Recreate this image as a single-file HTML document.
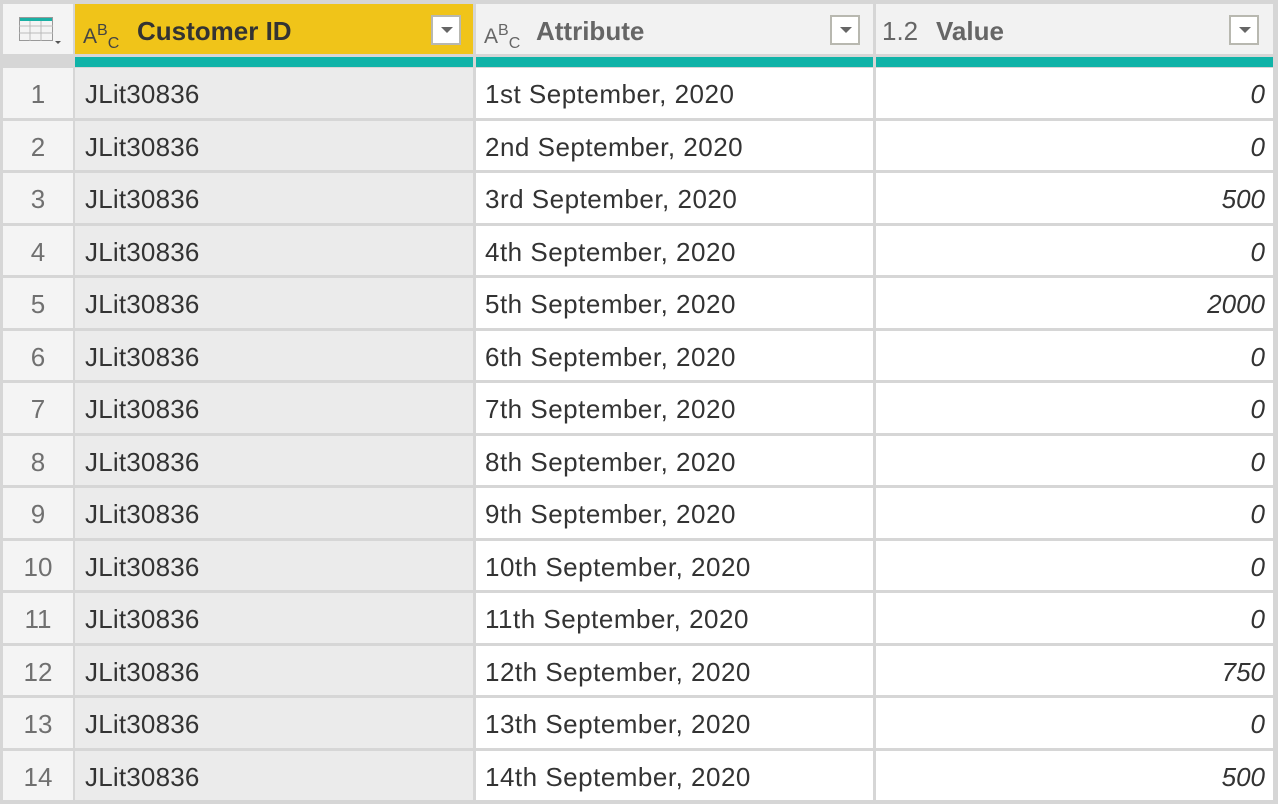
<!DOCTYPE html>
<html><head><meta charset="utf-8"><style>
body{margin:0;width:1278px;height:804px;overflow:hidden;background:#d6d6d6;font-family:"Liberation Sans",sans-serif;position:relative}
.c{position:absolute;box-sizing:border-box;white-space:nowrap;overflow:hidden}
.h{background:#f2f2f2;color:#666;font-weight:bold;font-size:26px;line-height:54px}
.dd{position:absolute;top:11px;width:30px;height:30px;background:#fff;border:2px solid #b8b8b0;box-sizing:border-box}
.dd:after{content:"";position:absolute;left:8px;top:10px;border-left:6px solid transparent;border-right:6px solid transparent;border-top:6px solid #666}
.n{background:#f4f4f4;color:#707070;font-size:26px;text-align:center}
.id{background:#ebebeb;color:#333;font-size:26px;padding-left:10px;letter-spacing:0.2px}
.at{background:#fff;color:#333;font-size:26px;padding-left:9px;letter-spacing:0.5px}
.v{background:#fff;color:#333;font-size:26px;font-style:italic;text-align:right;padding-right:8px}
.abc{font-weight:normal;font-size:21px;position:absolute;left:8px;top:0}
</style></head><body>
<div class="c" style="left:3px;top:4px;width:70px;height:50px;background:#f4f4f4">
<svg width="70" height="50"><rect x="16" y="13" width="34" height="4" fill="#1ab0a4"/><rect x="16.5" y="13.5" width="33" height="23" fill="none" stroke="#999"/><path d="M16 22h34M16 29h34M27 17v20M38 17v20" stroke="#bbb"/><path d="M52 37l3 3 3-3z" fill="#555"/></svg></div>
<div class="c h" style="left:75px;top:4px;width:398px;height:50px;background:#f0c419;color:#333"><span class="abc" style="color:#444">A<sup style="font-size:16px">B</sup><sub style="font-size:16px">C</sub></span><span style="position:absolute;left:62px">Customer ID</span><div class="dd" style="left:356px"></div></div>
<div class="c h" style="left:476px;top:4px;width:397px;height:50px"><span class="abc">A<sup style="font-size:16px">B</sup><sub style="font-size:16px">C</sub></span><span style="position:absolute;left:60px">Attribute</span><div class="dd" style="left:354px"></div></div>
<div class="c h" style="left:876px;top:4px;width:397px;height:50px"><span style="position:absolute;left:6px;font-weight:normal;font-size:26px">1.2</span><span style="position:absolute;left:60px">Value</span><div class="dd" style="left:353px"></div></div>
<div class="c" style="left:75px;top:57px;width:398px;height:10px;background:#10b3a8"></div>
<div class="c" style="left:476px;top:57px;width:397px;height:10px;background:#10b3a8"></div>
<div class="c" style="left:876px;top:57px;width:397px;height:10px;background:#10b3a8"></div>
<div id="rows"></div>
<script>
var vals=[0,0,500,0,2000,0,0,0,0,0,0,750,0,500],suf=["st","nd","rd"],h="";
for(var i=1;i<=14;i++){var t=67+52.5*(i-1)+1,hh=49.5,lh="line-height:53px;";
var s=(i<=3?suf[i-1]:"th");
h+='<div class="c n" style="left:3px;top:'+t+'px;width:70px;height:'+hh+'px;'+lh+'">'+i+'</div>';
h+='<div class="c id" style="left:75px;top:'+t+'px;width:398px;height:'+hh+'px;'+lh+'">JLit30836</div>';
h+='<div class="c at" style="left:476px;top:'+t+'px;width:397px;height:'+hh+'px;'+lh+'">'+i+s+' September, 2020</div>';
h+='<div class="c v" style="left:876px;top:'+t+'px;width:397px;height:'+hh+'px;'+lh+'">'+vals[i-1]+'</div>';}
document.getElementById("rows").innerHTML=h;
</script>
</body></html>
